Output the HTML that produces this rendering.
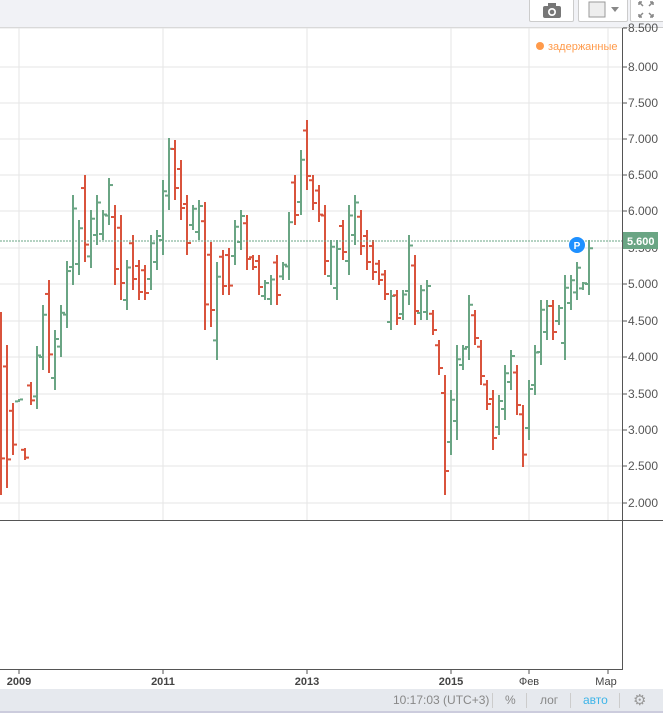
<!DOCTYPE html>
<html><head><meta charset="utf-8"><style>
body{margin:0;width:663px;height:714px;overflow:hidden;background:#fff;font-family:"Liberation Sans",sans-serif;position:relative}
.top{position:absolute;left:0;top:0;width:663px;height:27px;background:#f1f2f6;border-bottom:1px solid #ccc}
.btn{position:absolute;top:-2px;height:22px;background:#fff;border:1px solid #ccc;border-radius:2px}
.bb{position:absolute;left:0;top:689px;width:663px;height:22px;background:#e6e9ee;border-bottom:2px solid #ccd;font-size:12px;color:#888}
.bb span{position:absolute;top:4px}
.sep{position:absolute;top:4px;width:1px;height:15px;background:#ccc}
</style></head><body>
<div class="top"></div>
<div class="btn" style="left:529px;width:43px"><svg width="43" height="22"><rect x="13" y="7" width="18" height="12" rx="2" fill="#777"/><rect x="18" y="4" width="8" height="4" fill="#777"/><circle cx="22" cy="13" r="4" fill="#fff"/><circle cx="22" cy="13" r="2.3" fill="#777"/></svg></div>
<div class="btn" style="left:578px;width:48px"><svg width="48" height="22"><rect x="10" y="3" width="16" height="15" fill="#eee" stroke="#999"/><path d="M32 8h8l-4 5z" fill="#888"/></svg></div>
<div class="btn" style="left:630px;width:40px"><svg width="40" height="22" stroke="#888" stroke-width="1.5" fill="none"><path d="M8 3l4 4M8 3v3M8 3h3M22 3l-4 4M22 3v3M22 3h-3M8 18l4-4M8 18v-3M8 18h3M22 18l-4-4M22 18v-3M22 18h-3"/></svg></div>
<svg id="c" width="663" height="689" style="position:absolute;left:0;top:0" font-family="Liberation Sans, sans-serif"></svg>
<div class="bb">
<span style="left:393px">10:17:03 (UTC+3)</span><div class="sep" style="left:492px"></div>
<span style="left:505px">%</span><div class="sep" style="left:526px"></div>
<span style="left:540px">лог</span><div class="sep" style="left:570px"></div>
<span style="left:583px;color:#3cb4e8">авто</span><div class="sep" style="left:619px"></div>
<span style="left:633px;top:2px;font-size:15px;color:#999">⚙</span>
</div>
<script>
var s='';
var ys=[28,67,103,139,175,211,248,284,321,357,394,430,466,503];
var lb=['8.500','8.000','7.500','7.000','6.500','6.000','5.500','5.000','4.500','4.000','3.500','3.000','2.500','2.000'];
ys.forEach(function(y,i){s+='<line x1="0" x2="623" y1="'+y+'" y2="'+y+'" stroke="#e6e6e6"/><line x1="623" x2="627" y1="'+y+'" y2="'+y+'" stroke="#555"/><text x="628" y="'+(y+4)+'" font-size="12" fill="#555">'+lb[i]+'</text>';});
[19,163,307,451,529,608].forEach(function(x){s+='<line x1="'+x+'" x2="'+x+'" y1="28" y2="520" stroke="#e6e6e6"/><line x1="'+x+'" x2="'+x+'" y1="670" y2="674" stroke="#555"/>';});
var B=[[1,'r',312,495],[7,'r',345,488],[13,'r',403,455],[19,'g',399,402],[25,'r',448,460],[31,'r',382,405],[37,'g',346,409],[43,'g',305,370],[49,'r',280,373],[55,'g',330,390],[61,'g',305,357],[67,'g',261,328],[73,'g',195,285],[79,'g',220,275],[85,'r',175,262],[91,'g',210,268],[97,'g',195,245],[103,'g',210,240],[109,'g',178,225],[115,'r',205,285],[121,'r',215,300],[127,'g',260,310],[133,'r',235,290],[139,'r',260,300],[145,'r',265,300],[151,'g',235,290],[157,'g',230,270],[163,'g',180,255],[169,'g',138,210],[175,'r',140,200],[181,'r',160,220],[187,'r',195,255],[193,'g',205,230],[199,'g',200,240],[205,'r',202,330],[211,'r',242,327],[217,'g',262,360],[223,'r',250,295],[229,'r',248,295],[235,'g',220,265],[241,'g',210,250],[247,'r',215,270],[253,'r',255,270],[259,'r',255,295],[265,'g',280,300],[271,'g',275,305],[277,'r',255,305],[283,'g',262,280],[289,'g',212,280],[295,'r',175,225],[301,'g',150,215],[307,'r',120,190],[313,'r',175,210],[319,'r',185,222],[325,'r',205,275],[331,'g',240,285],[337,'g',240,300],[343,'r',220,260],[349,'g',205,275],[355,'g',195,245],[361,'r',210,255],[367,'r',230,270],[373,'r',240,280],[379,'r',260,285],[385,'r',270,300],[391,'g',290,330],[397,'r',290,325],[403,'g',290,320],[409,'g',235,305],[415,'r',255,325],[421,'g',285,320],[427,'g',280,320],[433,'r',310,335],[439,'r',340,375],[445,'r',375,495],[451,'g',390,455],[457,'g',345,440],[463,'g',345,370],[469,'g',295,360],[475,'r',310,345],[481,'r',340,385],[487,'r',380,410],[493,'r',390,450],[499,'g',395,435],[505,'g',365,420],[511,'g',350,390],[517,'r',365,415],[523,'r',405,467],[529,'g',380,440],[535,'g',345,395],[541,'g',300,365],[547,'g',300,340],[553,'r',300,340],[559,'g',305,325],[565,'g',275,360],[571,'g',275,310],[577,'g',262,300],[583,'g',282,290],[589,'g',240,295]];
B.forEach(function(b,i){var c=b[1]=='r'?'#d9533c':'#6aa584',x=b[0],t=b[2],bo=b[3],h=bo-t;
var o,cl;if(b[1]=='r'){o=t+h*0.15;cl=bo-h*0.2}else{o=bo-h*0.2;cl=t+h*0.15}
s+='<rect x="'+(x-1)+'" y="'+t+'" width="2" height="'+h+'" fill="'+c+'"/><rect x="'+(x-4)+'" y="'+(o-1)+'" width="3" height="2" fill="'+c+'"/><rect x="'+(x+1)+'" y="'+(cl-1)+'" width="3" height="2" fill="'+c+'"/>';});
s+='<line x1="0" x2="623" y1="241" y2="241" stroke="#6aa584" stroke-dasharray="2,1"/>';
s+='<rect x="623" y="232" width="35" height="17" fill="#6aa584"/><text x="627" y="245" font-size="11" font-weight="bold" fill="#fff">5.600</text>';
s+='<circle cx="577" cy="245" r="8" fill="#1e90ff"/><text x="577" y="249" font-size="10" font-weight="bold" fill="#fff" text-anchor="middle">P</text>';
s+='<circle cx="540" cy="46" r="4" fill="#ff9a4a"/><text x="548" y="50" font-size="11" fill="#ff9a4a">задержанные</text>';
s+='<line x1="0" x2="663" y1="520.5" y2="520.5" stroke="#555"/><line x1="622.5" x2="622.5" y1="28" y2="670" stroke="#555"/><line x1="0" x2="623" y1="669.5" y2="669.5" stroke="#555"/>';
[['2009',19],['2011',163],['2013',307],['2015',451]].forEach(function(a){s+='<text x="'+a[1]+'" y="685" font-size="11" font-weight="bold" fill="#444" text-anchor="middle">'+a[0]+'</text>';});
s+='<text x="529" y="685" font-size="11" fill="#444" text-anchor="middle">Фев</text><text x="606" y="685" font-size="11" fill="#444" text-anchor="middle">Мар</text>';
document.getElementById('c').innerHTML=s;
</script>
</body></html>
